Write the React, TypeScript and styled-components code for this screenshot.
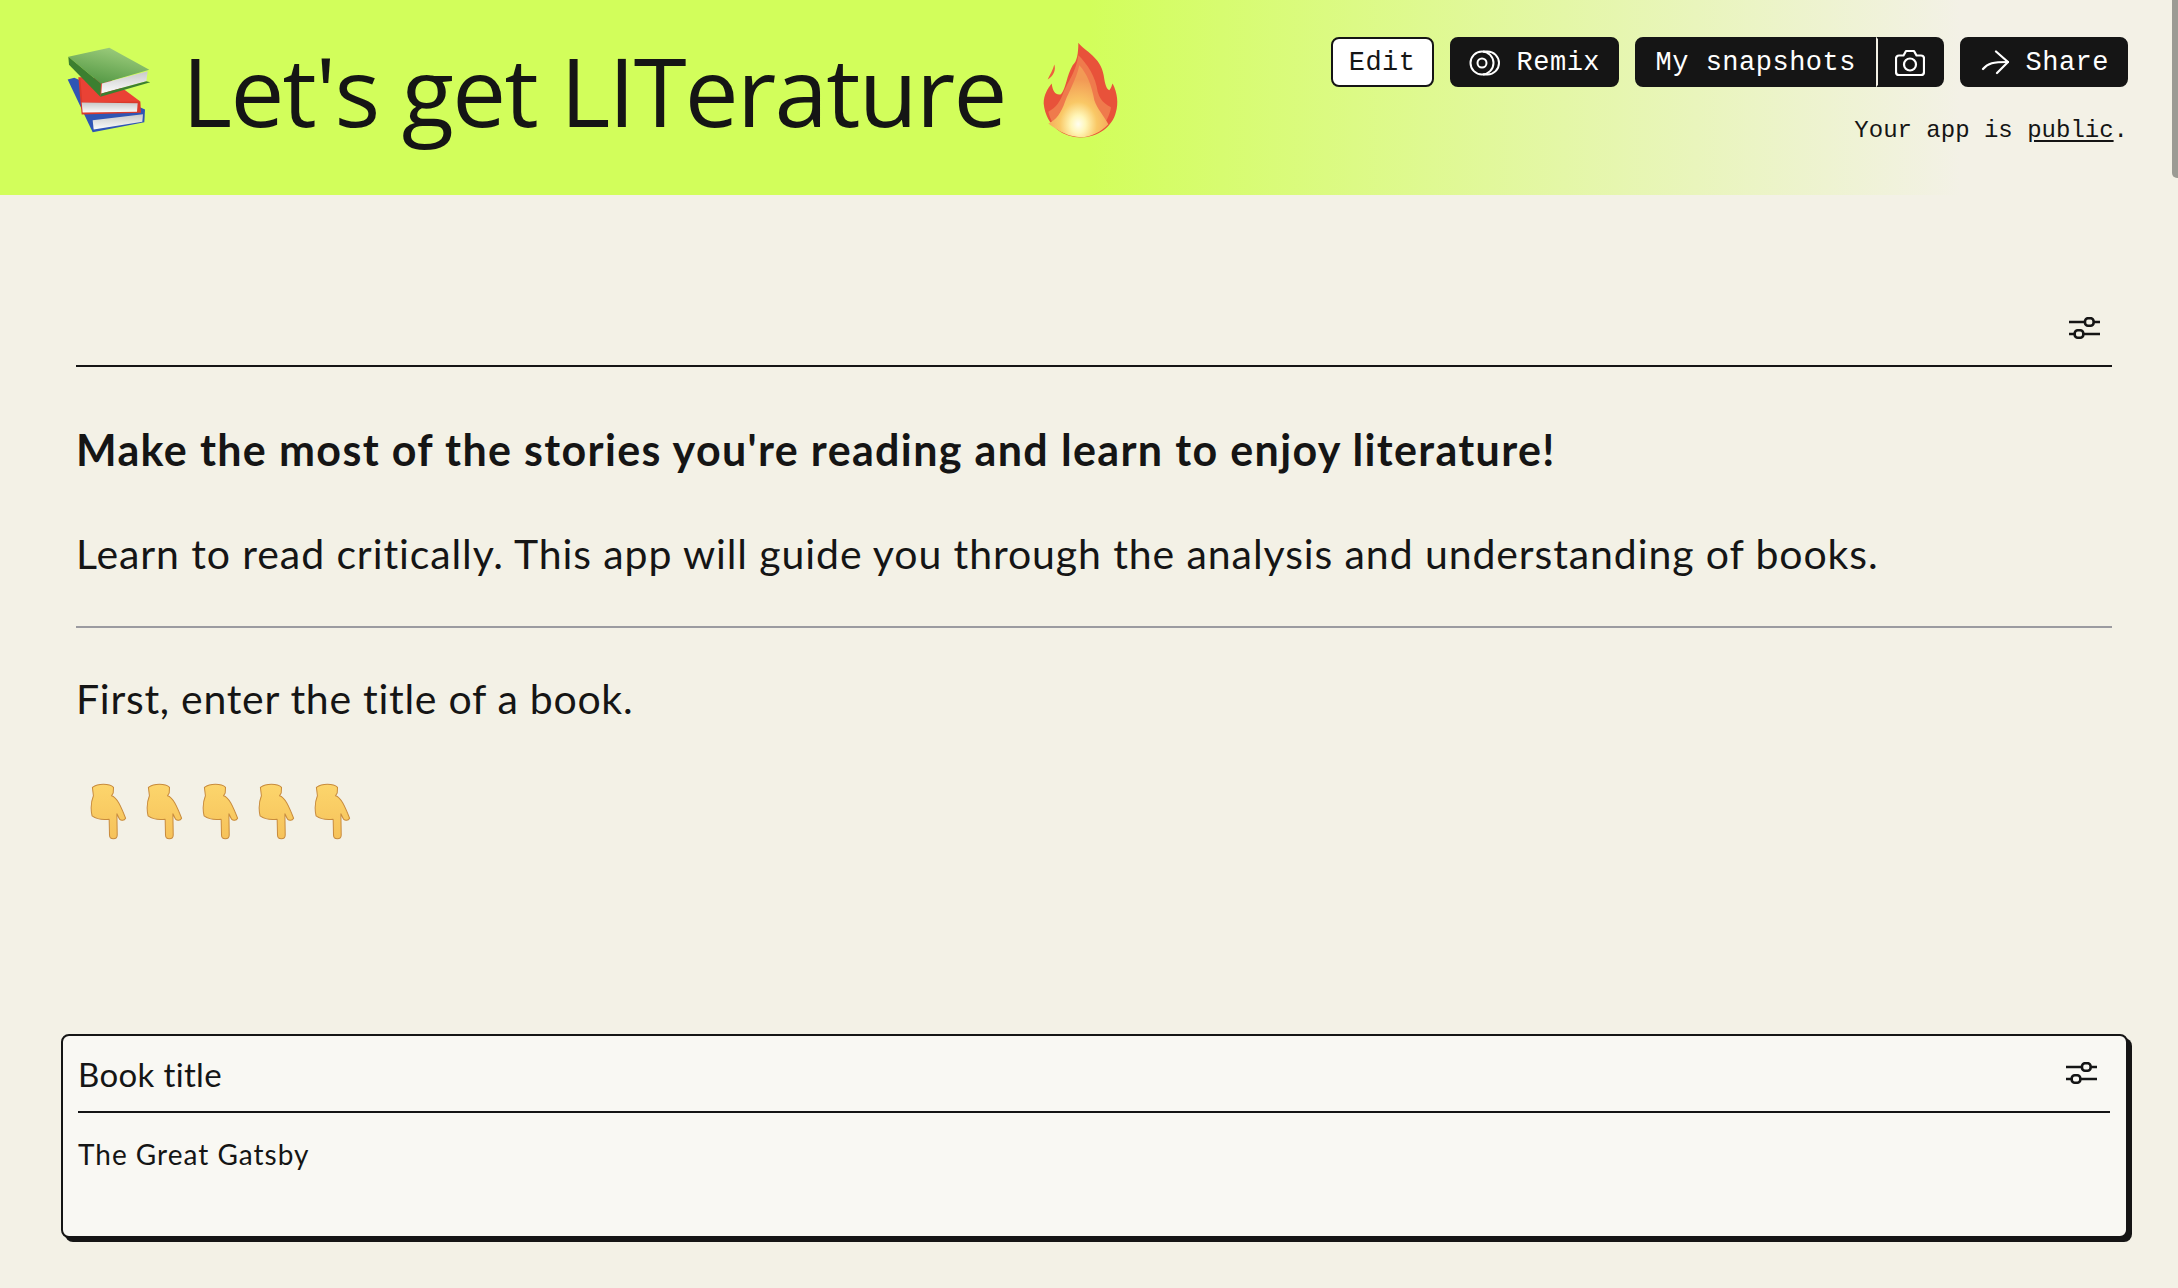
import React from "react";
import styled, { createGlobalStyle } from "styled-components";

const INK = "#151515";
const BG = "#f3f1e6";
const SANS = `"Lato", "Noto Sans", sans-serif`;
const MONO = `"Liberation Mono", "DejaVu Sans Mono", monospace`;

const Global = createGlobalStyle`
  html, body { margin: 0; padding: 0; height: 100%; overflow: hidden; background: ${BG}; }
  body { color: ${INK}; font-family: ${SANS}; }
  #root { height: 100%; }
`;

const Page = styled.div`
  position: relative;
  height: 1288px;
  overflow: hidden;
`;

const ScrollThumb = styled.div`
  position: absolute;
  top: 0;
  right: 0;
  width: 6px;
  height: 178px;
  background: #9b9b94;
  border-bottom-left-radius: 5px;
`;

const Header = styled.header`
  height: 195px;
  box-sizing: border-box;
  padding: 37px 50px 0 66px;
  display: flex;
  justify-content: space-between;
  align-items: flex-start;
  background: linear-gradient(90deg, #d2fe5b 0%, #d2fe5b 50%, ${BG} 90%);
`;

const TitleRow = styled.div`
  display: flex;
  align-items: center;
  height: 114px;
  margin-top: -4px;
`;

const Title = styled.h1`
  margin: 0 37px 0 31px;
  font-family: "Open Sans", ${SANS};
  font-weight: 400;
  font-size: 96px;
  line-height: 114px;
  letter-spacing: -1.7px;
  white-space: nowrap;
`;

const HeaderRight = styled.div`
  display: flex;
  flex-direction: column;
  align-items: flex-end;
`;

const Toolbar = styled.div`
  display: flex;
  gap: 16px;
`;

const ButtonGroup = styled.div`
  display: flex;
`;

const Btn = styled.button<{ $light?: boolean; $side?: "left" | "right" }>`
  height: 50px;
  box-sizing: border-box;
  display: flex;
  align-items: center;
  gap: 16px;
  padding: 2px ${(p) => (p.$light ? "16px" : p.$side === "left" ? "18.5px" : "17px")} 0;
  background: ${(p) => (p.$light ? "#fff" : INK)};
  color: ${(p) => (p.$light ? INK : "#fff")};
  border: 2px solid ${INK};
  border-radius: ${(p) =>
    p.$side === "left" ? "8px 0 0 8px" : p.$side === "right" ? "0 8px 8px 0" : "8px"};
  ${(p) => (p.$side === "right" ? "border-left: 2px solid #f3f1e6;" : "")}
  font-family: ${MONO};
  font-size: 27px;
  letter-spacing: 0.5px;
  white-space: nowrap;
`;

const Visibility = styled.p`
  margin: 29px 0 0 0;
  font-family: ${MONO};
  font-size: 24px;
  line-height: 30px;
  white-space: pre;
`;

const Public = styled.a`
  color: inherit;
  text-decoration: underline;
  text-underline-offset: 3px;
`;

const Content = styled.main`
  padding: 0 50px 0 61px;
`;

const Section = styled.section`
  padding: 0 16px 0 15px;
`;

const SectionBar = styled.div`
  height: 172px;
  box-sizing: border-box;
  display: flex;
  justify-content: flex-end;
  align-items: flex-start;
  padding: 122px 12px 0 0;
  border-bottom: 2px solid ${INK};
`;

const Lead = styled.p`
  margin: 57px 0 0;
  font-size: 43px;
  line-height: 52px;
  font-weight: 700;
  letter-spacing: 1.35px;
`;

const Body = styled.p<{ $top: number; $spacing: number }>`
  margin: ${(p) => p.$top}px 0 0;
  font-size: 41px;
  line-height: 52px;
  font-weight: 400;
  letter-spacing: ${(p) => p.$spacing}px;
`;

const Rule = styled.hr`
  margin: 46px 0 0;
  border: 0;
  height: 2px;
  background: #9b9ba0;
`;

const Hands = styled.div`
  display: flex;
  gap: 19px;
  margin: 58px 0 0 14px;
`;

const Card = styled.div`
  margin-top: 194px;
  height: 204px;
  box-sizing: border-box;
  padding: 0 16px 0 15px;
  background: #f9f8f3;
  border: 2px solid ${INK};
  border-radius: 8px;
  box-shadow: 4px 4px 0 ${INK};
`;

const CardHead = styled.div`
  height: 77px;
  box-sizing: border-box;
  display: flex;
  justify-content: space-between;
  align-items: center;
  padding-right: 13px;
  border-bottom: 2px solid ${INK};
`;

const CardLabel = styled.span`
  font-size: 33px;
  letter-spacing: 0.35px;
`;

const CardValue = styled.p`
  margin: 23px 0 0;
  font-size: 28px;
  line-height: 36px;
  letter-spacing: 1px;
`;

const Sliders = () => (
  <svg width="31" height="23" viewBox="0 0 31 23" fill="none" stroke={INK} strokeWidth="2.6">
    <path d="M0 5h16M24.600 5H31M0 17h5.700M14.300 17H31" />
    <rect x="16" y="1.200" width="8.600" height="7.600" rx="3" />
    <rect x="5.700" y="13.200" width="8.600" height="7.600" rx="3" />
  </svg>
);

const DiscIcon = () => (
  <svg width="32" height="26" viewBox="0 0 32 26" fill="none" stroke="#fff" strokeWidth="2">
    <circle cx="13" cy="13" r="11.500" />
    <circle cx="13" cy="13" r="4.500" />
    <path d="M14 1.500h4.500a11.500 11.500 0 0 1 0 23H14" />
  </svg>
);

const CameraIcon = () => (
  <svg width="30" height="28" viewBox="0 0 30 28" fill="none" stroke="#fff" strokeWidth="2.200">
    <path d="M4 6.500h4.500L11 2h8l2.500 4.500H26a3 3 0 0 1 3 3V23a3 3 0 0 1-3 3H4a3 3 0 0 1-3-3V9.500a3 3 0 0 1 3-3Z" strokeLinejoin="round" />
    <circle cx="15" cy="15.500" r="6" />
  </svg>
);

const ShareIcon = () => (
  <svg width="30" height="26" viewBox="0 0 30 26" fill="none" stroke="#fff" strokeWidth="2.200" strokeLinecap="round" strokeLinejoin="round">
    <path d="M4 19C9 13 14 12 29 12" />
    <path d="M17 1.500 29 12 18 23" />
  </svg>
);

const BooksEmoji = () => (
  <svg width="85" height="89" viewBox="75 72 255 266" aria-hidden="true">
    <defs>
      <linearGradient id="greenTop" x1="0.7" y1="0" x2="0.2" y2="1">
        <stop offset="0" stopColor="#9fce7e" />
        <stop offset="1" stopColor="#4e9440" />
      </linearGradient>
      <linearGradient id="pages" x1="0" y1="0" x2="0" y2="1">
        <stop offset="0" stopColor="#c9c9c9" />
        <stop offset="1" stopColor="#fbfbfb" />
      </linearGradient>
    </defs>
    <path d="M80 172 L100 167 L312 262 L310 300 L155 330 Z" fill="#2f55b4" />
    <path d="M155 294 L306 276 L304 299 L158 322 Z" fill="url(#pages)" />
    <path d="M112 165 L125 165 L298 238 L300 272 L122 277 Z" fill="#d93a2b" />
    <path d="M118 168 L200 165 L298 238 L124 240 Z" fill="#ea4235" />
    <path d="M122 241 L290 243 L288 269 L125 271 Z" fill="url(#pages)" />
    <path d="M82 104 L205 77 L325 143 L180 185 Z" fill="url(#greenTop)" />
    <path d="M82 104 L180 185 L178 224 L84 128 Z" fill="#3c7f30" />
    <path d="M183 184 L320 147 L316 177 L181 214 Z" fill="url(#pages)" />
    <path d="M178 224 L181 214 L316 177 L328 180 Z" fill="#3c7f30" />
  </svg>
);

const FireEmoji = () => (
  <svg width="76" height="97" viewBox="126 66 228 290" aria-hidden="true">
    <defs>
      <radialGradient id="flameCore" cx="0.5" cy="0.82" r="0.62">
        <stop offset="0" stopColor="#fffef0" />
        <stop offset="0.2" stopColor="#fff6b8" />
        <stop offset="0.5" stopColor="#f9c866" />
        <stop offset="1" stopColor="#f29a55" />
      </radialGradient>
    </defs>
    <path d="M160 133C156 150 146 165 140 178C156 170 166 150 160 133Z" fill="#ee5f3e" />
    <path d="M232 68C250 92 300 112 308 165C312 190 315 205 325 210C332 202 332 195 335 190C350 220 352 250 345 275C335 320 290 352 240 352C190 352 135 320 128 250C128 225 140 205 152 190C155 215 165 226 180 222C195 205 197 165 215 135C228 125 232 100 232 68Z" fill="#e8523a" />
    <path d="M232 105C258 130 285 170 290 215C300 250 322 255 330 262C322 310 285 348 240 350C195 350 152 325 142 275C165 262 178 245 188 215C203 180 225 155 232 105Z" fill="#ef7a4c" />
    <path d="M235 135C258 160 272 195 280 240C288 265 308 285 322 312C300 335 270 350 240 351C205 350 175 335 142 310C165 300 180 280 192 245C205 210 225 180 235 135Z" fill="url(#flameCore)" />
  </svg>
);

const HandEmoji = () => (
  <svg width="37" height="57" viewBox="148 130 110 170" aria-hidden="true">
    <defs>
      <linearGradient id="handFill" x1="0" y1="0" x2="0" y2="1">
        <stop offset="0" stopColor="#fcd56c" />
        <stop offset="1" stopColor="#f6c25a" />
      </linearGradient>
    </defs>
    <path
      d="M155 143C172 131 205 131 218 143L217 160L212 168C228 172 240 200 254 235C250 243 240 242 236 238L228 222L229 285C229 300 206 300 206 285L205 238C190 240 168 238 154 228C150 210 150 188 158 168Z"
      fill="url(#handFill)"
      stroke="#c88b3c"
      strokeWidth="3"
      strokeLinejoin="round"
    />
  </svg>
);

export default function App() {
  return (
    <Page>
      <Global />
      <Header>
        <TitleRow>
          <BooksEmoji />
          <Title>Let's get LITerature</Title>
          <FireEmoji />
        </TitleRow>
        <HeaderRight>
          <Toolbar>
            <Btn $light>Edit</Btn>
            <Btn><DiscIcon />Remix</Btn>
            <ButtonGroup>
              <Btn $side="left">My snapshots</Btn>
              <Btn $side="right"><CameraIcon /></Btn>
            </ButtonGroup>
            <Btn><ShareIcon />Share</Btn>
          </Toolbar>
          <Visibility>Your app is <Public>public</Public>.</Visibility>
        </HeaderRight>
      </Header>
      <Content>
        <Section>
          <SectionBar><Sliders /></SectionBar>
          <Lead>Make the most of the stories you're reading and learn to enjoy literature!</Lead>
          <Body $top={52} $spacing={0.9}>Learn to read critically. This app will guide you through the analysis and understanding of books.</Body>
          <Rule />
          <Body $top={45} $spacing={0.72}>First, enter the title of a book.</Body>
          <Hands>
            <HandEmoji /><HandEmoji /><HandEmoji /><HandEmoji /><HandEmoji />
          </Hands>
        </Section>
        <Card>
          <CardHead>
            <CardLabel>Book title</CardLabel>
            <Sliders />
          </CardHead>
          <CardValue>The Great Gatsby</CardValue>
        </Card>
      </Content>
      <ScrollThumb />
    </Page>
  );
}
